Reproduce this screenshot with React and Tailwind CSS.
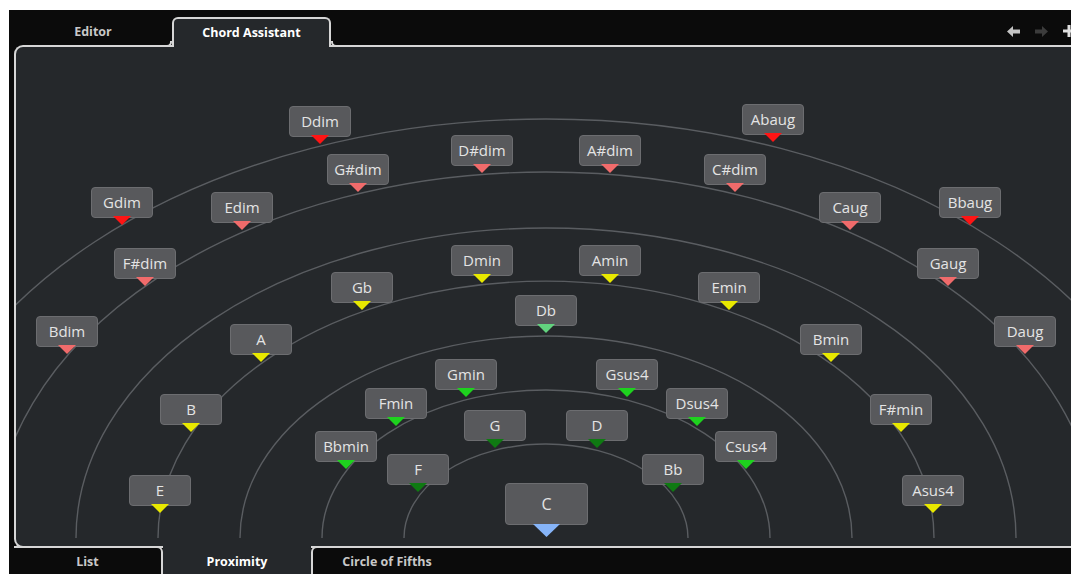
import React from "react";

const TRI = {
  red: "#ff1414",
  salmon: "#f06b6b",
  yellow: "#e8e800",
  mint: "#62d27e",
  green: "#1ed21e",
  dark: "#0f7a12",
};

// [label, center x, box top] in page coordinates
const CHORDS = [
  ["Ddim", 320, 106, "red"],
  ["Abaug", 773, 104, "red"],
  ["Gdim", 122, 187, "red"],
  ["Bbaug", 970, 187, "red"],
  ["G#dim", 358, 154, "salmon"],
  ["D#dim", 482, 135, "salmon"],
  ["A#dim", 610, 135, "salmon"],
  ["C#dim", 735, 154, "salmon"],
  ["Edim", 242, 192, "salmon"],
  ["Caug", 850, 192, "salmon"],
  ["F#dim", 145, 248, "salmon"],
  ["Gaug", 948, 248, "salmon"],
  ["Bdim", 67, 316, "salmon"],
  ["Daug", 1025, 316, "salmon"],
  ["Gb", 362, 272, "yellow"],
  ["Dmin", 482, 245, "yellow"],
  ["Amin", 610, 245, "yellow"],
  ["Emin", 729, 272, "yellow"],
  ["A", 261, 324, "yellow"],
  ["Bmin", 831, 324, "yellow"],
  ["B", 191, 394, "yellow"],
  ["F#min", 901, 394, "yellow"],
  ["E", 160, 475, "yellow"],
  ["Asus4", 933, 475, "yellow"],
  ["Db", 546, 295, "mint"],
  ["Gmin", 466, 359, "green"],
  ["Gsus4", 627, 359, "green"],
  ["Fmin", 396, 388, "green"],
  ["Dsus4", 697, 388, "green"],
  ["Bbmin", 346, 431, "green"],
  ["Csus4", 746, 431, "green"],
  ["G", 495, 410, "dark"],
  ["D", 597, 410, "dark"],
  ["F", 418, 454, "dark"],
  ["Bb", 673, 454, "dark"],
];

const CX = 546;
const CY = 538;
const ARCS = [
  [142, 94],
  [224, 148],
  [306, 202],
  [388, 257],
  [470, 310],
  [552, 366],
  [638, 419],
];

function Chord({ label, x, y, color }) {
  return (
    <div className="absolute w-[62px] h-[31px]" style={{ left: x - 31, top: y }}>
      <div className="w-full h-full rounded-[4px] bg-[#58595c] border border-[#6c6d70] flex items-center justify-center text-[15px] text-[#e4e4e4] leading-none">
        {label}
      </div>
      <svg className="absolute left-[22px] top-[29px]" width="18" height="10" viewBox="0 0 18 10">
        <path d="M0 0 L18 0 L9 9 Z" fill={TRI[color]} />
      </svg>
    </div>
  );
}

function Proximity() {
  return (
    <div className="absolute left-[-16px] top-[-47px] w-[1071px] h-[574px]">
      <svg className="absolute inset-0" width="1071" height="574">
        {ARCS.map(([a, b]) => (
          <path
            key={a}
            d={`M${CX - a} ${CY} A ${a} ${b} 0 0 1 ${CX + a} ${CY}`}
            fill="none"
            stroke="#5a5d61"
            strokeWidth="1.4"
          />
        ))}
      </svg>
      {CHORDS.map(([label, x, y, color]) => (
        <Chord key={label} label={label} x={x} y={y} color={color} />
      ))}
      {/* root chord */}
      <div className="absolute left-[505px] top-[483px] w-[83px] h-[55px]">
        <div className="w-full h-[42px] rounded-[4px] bg-[#58595c] border border-[#6c6d70] flex items-center justify-center text-[16px] text-[#e4e4e4]">
          C
        </div>
        <svg className="absolute left-[28px] top-[41px]" width="27" height="13" viewBox="0 0 27 13">
          <path d="M0 0 L27 0 L13.5 13 Z" fill="#86b4f8" />
        </svg>
      </div>
    </div>
  );
}

export default function App() {
  return (
    <div className="w-[1071px] h-[574px] bg-white pt-[10px] pl-[9px] overflow-hidden font-['Open_Sans','Noto_Sans',sans-serif]">
      <div className="h-full bg-[#0b0b0b] flex flex-col">
        {/* Top tabs */}
        <div className="h-[35px] flex items-end pl-[5px] relative z-10 shrink-0">
          <div className="w-[158px] h-[28px] flex items-center justify-center pt-[3px] text-[12.5px] font-bold text-[#c8c8c8]">
            Editor
          </div>
          <div className="relative w-[159px] h-[30px] -mb-[2px] bg-[#25282b] border-2 border-b-0 border-[#d6d6d6] rounded-t-[6px] flex items-center justify-center text-[12.5px] font-bold text-white">
            Chord Assistant
            <span className="absolute -left-[8px] bottom-0 w-[6px] h-[6px] border-b-2 border-r-2 border-[#d6d6d6] rounded-br-[5px] bg-[#0b0b0b]" />
            <span className="absolute -right-[8px] bottom-0 w-[6px] h-[6px] border-b-2 border-l-2 border-[#d6d6d6] rounded-bl-[5px] bg-[#0b0b0b]" />
          </div>
          <div className="ml-auto flex items-center gap-[15px] h-[28px] -mr-[4px]">
            <svg width="13" height="11" viewBox="0 0 13 11">
              <path d="M0 5.5 L6 0 L6 3.5 L13 3.5 L13 7.5 L6 7.5 L6 11 Z" fill="#c4c4c4" />
            </svg>
            <svg width="13" height="11" viewBox="0 0 13 11">
              <path d="M13 5.5 L7 0 L7 3.5 L0 3.5 L0 7.5 L7 7.5 L7 11 Z" fill="#3c3c3c" />
            </svg>
            <svg width="12" height="12" viewBox="0 0 12 12">
              <path d="M4.5 0 H7.5 V4.5 H12 V7.5 H7.5 V12 H4.5 V7.5 H0 V4.5 H4.5 Z" fill="#e0e0e0" />
            </svg>
          </div>
        </div>

        {/* Panel */}
        <div className="relative flex-1 ml-[5px] border-2 border-r-0 border-[#d6d6d6] rounded-l-[9px] bg-[#25282b] overflow-hidden">
          <Proximity />
        </div>

        {/* Bottom tabs */}
        <div className="h-[28px] -mt-[2px] flex pl-[5px] relative z-10 shrink-0">
          <div className="w-[149px] h-full flex items-center justify-center pt-[3px] text-[12.5px] font-bold text-[#c8c8c8] border-t-2 border-r-2 border-[#d6d6d6] rounded-tr-[6px]">
            List
          </div>
          <div className="w-[148px] h-full bg-[#25282b] flex items-center justify-center pt-[5px] text-[12.5px] font-bold text-white">
            Proximity
          </div>
          <div className="w-[150px] h-full flex items-center justify-center pt-[3px] text-[12.5px] font-bold text-[#c8c8c8] border-t-2 border-l-2 border-[#d6d6d6] rounded-tl-[6px]">
            Circle of Fifths
          </div>
          <div className="flex-1 border-t-2 border-[#d6d6d6]" />
        </div>
      </div>
    </div>
  );
}
